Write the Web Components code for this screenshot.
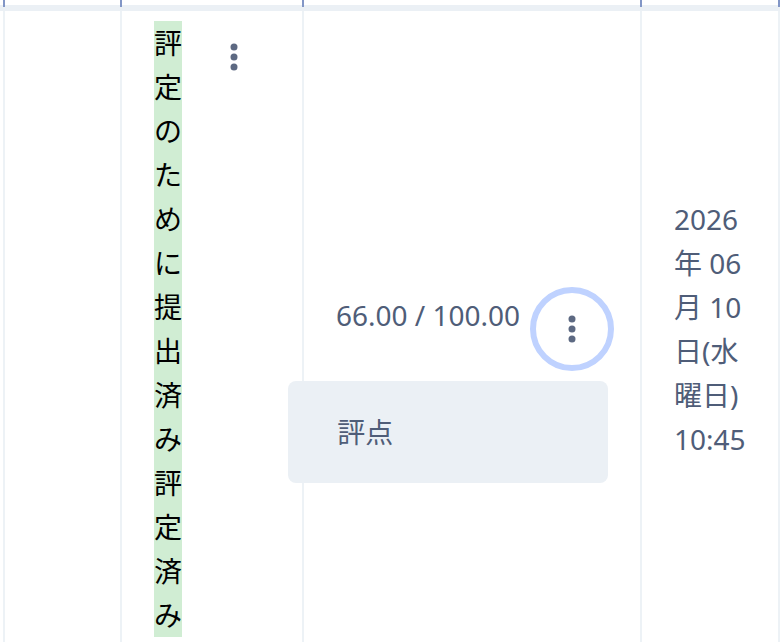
<!DOCTYPE html>
<html lang="ja">
<head>
<meta charset="utf-8">
<title>提出一覧</title>
<style>
body { margin: 0; overflow: hidden; background: #fff; color: #4f5d78; font: 28px/44px "Noto Sans", "Noto Sans CJK JP", sans-serif; }
</style>
</head>
<body>
<grading-table></grading-table>

<template id="kebab-button">
<style>
:host { display: block; position: relative; flex: none; }
button { display: grid; place-items: center; box-sizing: border-box; width: 84px; height: 84px; padding: 0; border: 6px solid transparent; border-radius: 50%; background: none; color: #5d6982; cursor: pointer; }
:host([open]) button { border-color: #bfd2ff; background: #fff; }
svg { display: block; width: 8px; height: 28px; fill: currentColor; }
</style>
<button type="button" aria-label="操作メニュー" aria-haspopup="menu"><svg viewBox="0 0 8 28"><circle cx="4" cy="4" r="3.5"/><circle cx="4" cy="14" r="3.5"/><circle cx="4" cy="24" r="3.5"/></svg></button>
<slot></slot>
</template>

<template id="action-menu">
<style>
:host { display: block; position: absolute; top: 94px; right: 6px; width: 320px; z-index: 1; }
button { display: block; width: 100%; padding: 29px 49px; border: 0; border-radius: 8px; background: #ebf0f5; color: inherit; font: inherit; text-align: left; cursor: pointer; }
</style>
<div role="menu"><button type="button" role="menuitem"><slot></slot></button></div>
</template>

<template id="status-badge">
<style>
:host { display: block; background: #d0edd3; color: #000; }
</style>
<slot></slot>
</template>

<template id="cell-actions">
<style>
:host { display: flex; align-items: flex-start; gap: 10px; }
.text { padding-top: 6px; }
:host([narrow]) .text { width: 28px; }
:host(:not([narrow])) .text { white-space: nowrap; }
</style>
<div class="text"><slot></slot></div>
<slot name="action"></slot>
</template>

<template id="grading-table">
<style>
:host { display: block; }
table { width: 100%; table-layout: fixed; border-collapse: separate; border-spacing: 0; }
.edge { width: 5px; }
.user { width: 15%; }
.status { width: 182px; }
.date { width: 138px; }
th { height: 11px; padding: 0; background: linear-gradient(#8296c6, #8296c6) right top / 2px 7px no-repeat, linear-gradient(#ebf0f5, #ebf0f5) left bottom / 100% 6px no-repeat; }
td { padding: 10px 32px; border-right: 2px solid #edf2f6; vertical-align: middle; text-align: left; }
td.edge { padding: 0; }
td.top { padding-top: 4px; vertical-align: top; }
</style>
<table>
<thead><tr><th class="edge"></th><th class="user" aria-label="ユーザ"></th><th class="status" aria-label="ステータス"></th><th aria-label="評点"></th><th class="date" aria-label="最終更新日時"></th></tr></thead>
<tbody><tr>
<td class="edge"></td>
<td></td>
<td class="top"><cell-actions narrow><status-badge>評定のために提出済み</status-badge><status-badge>評定済み</status-badge><kebab-button slot="action"></kebab-button></cell-actions></td>
<td><cell-actions>66.00 / 100.00<kebab-button slot="action" open><action-menu>評点</action-menu></kebab-button></cell-actions></td>
<td class="date">2026年 06月 10日(水曜日) 10:45</td>
</tr></tbody>
</table>
</template>

<script>
for (const name of ["kebab-button", "action-menu", "status-badge", "cell-actions", "grading-table"]) {
  customElements.define(name, class extends HTMLElement {
    constructor() {
      super();
      this.attachShadow({ mode: "open" }).append(document.getElementById(name).content.cloneNode(true));
    }
  });
}
</script>
</body>
</html>
